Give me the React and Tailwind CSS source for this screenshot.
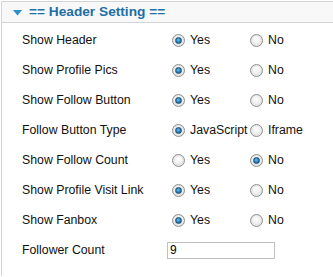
const ROWS = [
  { label: 'Show Header', opts: ['Yes', 'No'], checked: 0 },
  { label: 'Show Profile Pics', opts: ['Yes', 'No'], checked: 0 },
  { label: 'Show Follow Button', opts: ['Yes', 'No'], checked: 0 },
  { label: 'Follow Button Type', opts: ['JavaScript', 'Iframe'], checked: 0 },
  { label: 'Show Follow Count', opts: ['Yes', 'No'], checked: 1 },
  { label: 'Show Profile Visit Link', opts: ['Yes', 'No'], checked: 0 },
  { label: 'Show Fanbox', opts: ['Yes', 'No'], checked: 0 },
];

function Radio({ on }) {
  return (
    <span className="relative flex h-[13px] w-[13px] shrink-0 items-center justify-center rounded-full border border-[#8e8f8f] bg-[radial-gradient(circle_at_50%_40%,#ffffff_0%,#f0f0f0_45%,#cfcfcf_100%)] shadow-[inset_0_0_0_1px_#e6e6e6]">
      {on && (
        <span className="h-[7px] w-[7px] rounded-full border border-[#1e4f73] bg-[radial-gradient(circle_at_45%_40%,#7ec4ef_0%,#2a86c2_45%,#0f4d80_100%)]" />
      )}
    </span>
  );
}

export default function App() {
  return (
    <div className="h-[277px] w-[333px] overflow-hidden bg-white font-['Liberation_Sans',Arial,sans-serif]">
      <div className="ml-[1px] mt-[1px] w-[340px] border-l border-t border-[#d3d3d3]">
        <div className="flex h-[21px] items-center border-b border-[#d3d3d3] bg-[#f8f8f8] pl-[11px]">
          <svg width="9" height="6" viewBox="0 0 9 6" className="mt-[1px]">
            <path d="M0 0 H9 L4.5 5.5 Z" fill="#2b8fcb" />
          </svg>
          <span className="ml-[7px] text-[13.7px] font-bold leading-none text-[#1f6ea5]">
            == Header Setting ==
          </span>
        </div>
        <div className="pb-[11px] pt-[2px] text-[12.3px] text-[#111]">
          {ROWS.map((r) => (
            <div key={r.label} className="flex h-[30px] items-center pl-[20px]">
              <span className="w-[150px] shrink-0">{r.label}</span>
              {r.opts.map((o, i) => (
                <span key={o} className="flex w-[78px] items-center">
                  <Radio on={r.checked === i} />
                  <span className="ml-[5px]">{o}</span>
                </span>
              ))}
            </div>
          ))}
          <div className="flex h-[30px] items-center pl-[20px]">
            <span className="w-[145px] shrink-0">Follower Count</span>
            <input
              readOnly
              value="9"
              className="h-[17px] w-[108px] border border-[#c0c0c0] px-[2px] text-[12px] text-black outline-none"
            />
          </div>
        </div>
      </div>
    </div>
  );
}
